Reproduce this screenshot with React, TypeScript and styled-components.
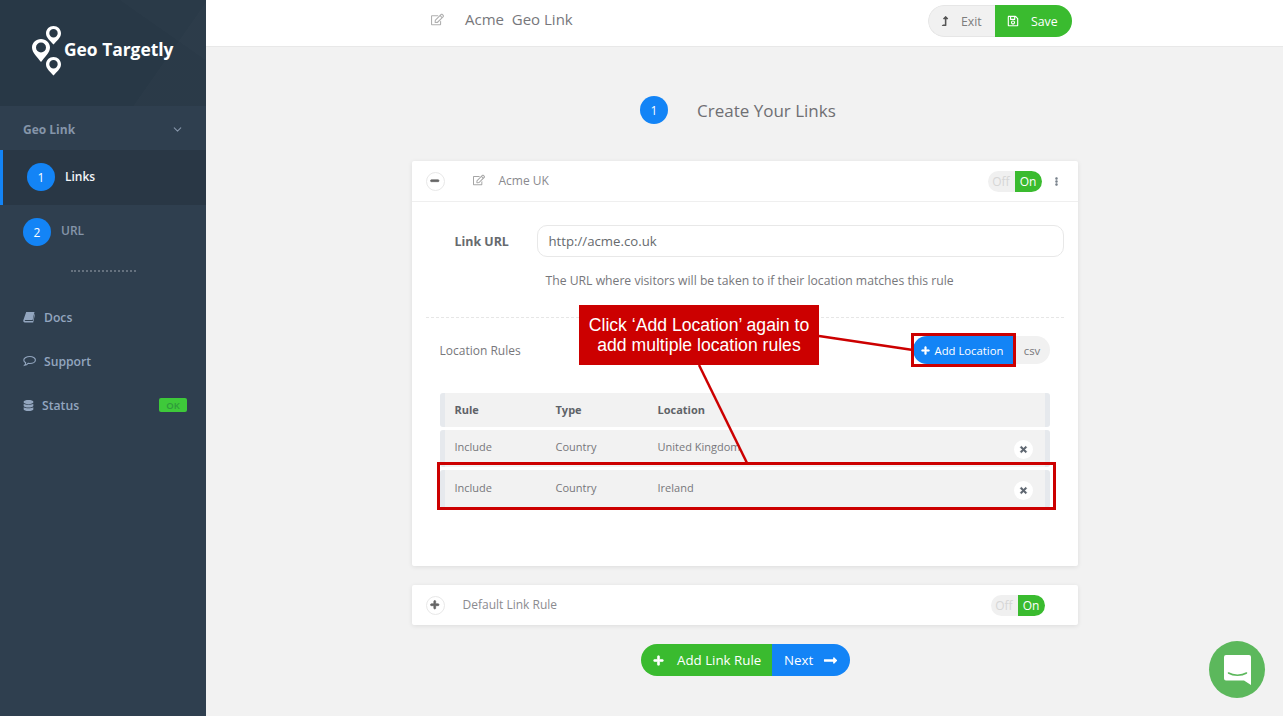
import React from "react";
import styled, { createGlobalStyle } from "styled-components";
import {
  FaDatabase,
  FaEllipsisV,
  FaLevelUpAlt,
  FaLongArrowAltRight,
  FaMinus,
  FaPlus,
  FaRegEdit,
  FaRegSave,
  FaTimes,
} from "react-icons/fa";
import { FiChevronDown } from "react-icons/fi";

const GREEN = "#3abb2f";
const BLUE = "#1384f6";
const RED = "#cc0000";

const GlobalStyle = createGlobalStyle`
  html, body {
    margin: 0;
    padding: 0;
    height: 100%;
    overflow: hidden;
    background: #f2f2f2;
  }
  body {
    font-family: "Open Sans", "Liberation Sans", sans-serif;
    color: #6d6d6d;
  }
  * {
    box-sizing: border-box;
  }
`;

const Page = styled.div`
  position: relative;
  display: flex;
  width: 100%;
  height: 716px;
  overflow: hidden;
`;

const Sidebar = styled.aside`
  flex: 0 0 206px;
  background: #2f3f4f;
`;

const LogoArea = styled.div`
  height: 106px;
  padding: 26px 0 0 30px;
  display: flex;
  align-items: flex-start;
  background:
    linear-gradient(125deg, transparent 74%, rgba(255, 255, 255, 0.012) 74.2%),
    linear-gradient(215deg, #2a3a48 0%, #2a3a48 24%, #283846 24.2%);
`;

const LogoText = styled.span`
  margin: 13px 0 0 2px;
  color: #ffffff;
  font-size: 17.4px;
  font-weight: 700;
  line-height: 20px;
  white-space: nowrap;
`;

const GroupRow = styled.div`
  height: 44px;
  padding: 2px 22px 0 23px;
  display: flex;
  align-items: center;
  justify-content: space-between;
  color: #8595a9;
  font-size: 12px;
  font-weight: 700;
`;

const StepRow = styled.div<{ $active?: boolean }>`
  height: 55px;
  display: flex;
  align-items: flex-start;
  padding: 13px 0 0 ${(p) => (p.$active ? 24 : 23)}px;
  background: ${(p) => (p.$active ? "#293745" : "transparent")};
  border-left: ${(p) => (p.$active ? `3px solid ${BLUE}` : "0")};
`;

const StepNumber = styled.span<{ $size: number }>`
  flex: none;
  width: ${(p) => p.$size}px;
  height: ${(p) => p.$size}px;
  border-radius: 50%;
  background: ${BLUE};
  color: #ffffff;
  display: flex;
  align-items: center;
  justify-content: center;
  font-size: 12px;
`;

const StepLabel = styled.span<{ $active?: boolean }>`
  margin: ${(p) => (p.$active ? 6 : 5)}px 0 0 10px;
  color: ${(p) => (p.$active ? "#f2f5f8" : "#8595a9")};
  font-size: 12px;
  font-weight: 600;
  line-height: 16px;
`;

const Dots = styled.div`
  width: 65px;
  margin: 10px 0 23px 71px;
  border-top: 2px dotted #65717e;
`;

const NavLink = styled.div<{ $gap: number }>`
  height: 44px;
  padding: 0 19px 0 23px;
  display: flex;
  align-items: center;
  gap: ${(p) => p.$gap}px;
  color: #93a6bf;
  font-size: 12.2px;
  font-weight: 600;
`;

const OkBadge = styled.span`
  margin-left: auto;
  width: 28px;
  height: 14px;
  border-radius: 2px;
  background: #3ec93a;
  color: #2f9a3c;
  font-size: 9.5px;
  font-weight: 600;
  display: flex;
  align-items: center;
  justify-content: center;
`;

const Main = styled.main`
  flex: 1;
  min-width: 0;
  display: flex;
  flex-direction: column;
  align-items: center;
`;

const TopBar = styled.header`
  align-self: stretch;
  flex: none;
  height: 47px;
  background: #ffffff;
  border-bottom: 1px solid #e8e8e8;
  padding: 5px 211px 0 225px;
  display: flex;
  align-items: flex-start;
`;

const DocTitle = styled.div`
  margin-top: -1px;
  display: flex;
  align-items: center;
  gap: 21px;
  height: 30px;
  color: #77777b;
  font-size: 15px;
  white-space: pre;
`;

const ExitSave = styled.div`
  margin-left: auto;
  display: flex;
  height: 32px;
  border-radius: 16px;
  overflow: hidden;
  font-size: 12.3px;
`;

const ExitButton = styled.div`
  width: 67px;
  padding-left: 11px;
  background: #f1f1f1;
  border: 1px solid #e6e6e6;
  border-right: 0;
  border-radius: 16px 0 0 16px;
  color: #7d7d7d;
  display: flex;
  align-items: center;
  gap: 11px;
`;

const SaveButton = styled.div`
  width: 77px;
  padding-left: 12px;
  background: ${GREEN};
  color: #ffffff;
  display: flex;
  align-items: center;
  gap: 12px;
`;

const StepHeading = styled.div`
  flex: none;
  width: 209px;
  margin: 49px 0 37px;
  display: flex;
  align-items: center;
  gap: 29px;
  color: #6f6f73;
  font-size: 17px;
  white-space: nowrap;
`;

const Card = styled.section`
  flex: none;
  width: 666px;
  background: #ffffff;
  border-radius: 2px;
  box-shadow: 0 1px 5px rgba(0, 0, 0, 0.09);
`;

const RuleCard = styled(Card)`
  height: 405px;
`;

const DefaultCard = styled(Card)`
  height: 40px;
  margin-top: 19px;
  padding: 0 33px 0 14px;
  display: flex;
  align-items: center;
  color: #8b8b8f;
  font-size: 12px;
`;

const CardHeader = styled.div`
  height: 41px;
  padding: 0 16px 0 14px;
  border-bottom: 1px solid #efefef;
  display: flex;
  align-items: center;
  color: #8a8a8e;
  font-size: 12px;
`;

const RoundToggle = styled.span`
  flex: none;
  width: 19px;
  height: 19px;
  border: 1px solid #e8e8e8;
  border-radius: 50%;
  background: #ffffff;
  color: #666666;
  font-size: 9.5px;
  display: flex;
  align-items: center;
  justify-content: center;
  svg {
    stroke: currentColor;
    stroke-width: 40;
  }
`;

const EditIcon = styled.span`
  margin: -2px 14px 0 28px;
  display: flex;
  color: #a6a6a6;
  font-size: 12px;
`;

const CardTitle = styled.span`
  margin-top: -2px;
`;

const DefaultTitle = styled(CardTitle)`
  margin-left: 18px;
`;

const Switch = styled.div`
  margin-left: auto;
  width: 54px;
  height: 21px;
  display: flex;
  border-radius: 11px;
  overflow: hidden;
  font-size: 12px;
`;

const SwitchSide = styled.span<{ $on?: boolean }>`
  flex: 1;
  display: flex;
  align-items: center;
  justify-content: center;
  background: ${(p) => (p.$on ? GREEN : "#f0f0f0")};
  color: ${(p) => (p.$on ? "#ffffff" : "#d6d6d6")};
`;

const MoreIcon = styled.span`
  margin-left: 10px;
  width: 10px;
  display: flex;
  justify-content: center;
  color: #77808a;
  font-size: 9px;
`;

const CardBody = styled.div`
  padding: 23px 14px 0 14px;
`;

const UrlRow = styled.div`
  display: flex;
  align-items: center;
  padding-left: 29px;
`;

const FieldLabel = styled.label`
  flex: none;
  width: 82px;
  color: #666a6e;
  font-size: 12.4px;
  font-weight: 700;
`;

const UrlField = styled.div`
  flex: 1;
  height: 32px;
  padding-left: 11px;
  border: 1px solid #e8e8e8;
  border-radius: 10px;
  color: #666a6e;
  font-size: 13.2px;
  display: flex;
  align-items: center;
`;

const Hint = styled.p`
  margin: 15px 0 0 120px;
  height: 18px;
  color: #77777b;
  font-size: 12.2px;
  line-height: 18px;
  white-space: nowrap;
`;

const Divider = styled.div`
  margin-top: 27px;
  border-top: 1px dashed #e6e6e6;
`;

const RulesHeader = styled.div`
  margin-top: 17px;
  height: 30px;
  padding: 0 14px;
  display: flex;
  align-items: center;
  color: #77777b;
  font-size: 12px;
`;

const AddButtons = styled.div`
  margin-left: auto;
  display: flex;
  height: 28px;
  border-radius: 14px;
  overflow: hidden;
  font-size: 11.3px;
`;

const AddLocation = styled.div`
  width: 102px;
  padding-left: 8px;
  background: ${BLUE};
  color: #ffffff;
  display: flex;
  align-items: center;
  gap: 5px;
  svg {
    stroke: currentColor;
    stroke-width: 30;
  }
`;

const Csv = styled.div`
  width: 35px;
  background: #f1f1f1;
  color: #77777b;
  display: flex;
  align-items: center;
  justify-content: center;
`;

const RuleTable = styled.div`
  margin: 28px 14px 0;
  display: flex;
  flex-direction: column;
  gap: 3px;
`;

const TableRow = styled.div<{ $height: number; $lift: number; $head?: boolean }>`
  height: ${(p) => p.$height}px;
  padding: 0 12px ${(p) => p.$lift}px 10px;
  display: grid;
  grid-template-columns: 101px 102px 1fr 19px;
  align-items: center;
  background: #f2f2f2;
  border-left: 5px solid #e6e9ed;
  border-right: 5px solid #e6e9ed;
  border-radius: 3px;
  color: ${(p) => (p.$head ? "#5f6368" : "#77777b")};
  font-size: 11px;
  font-weight: ${(p) => (p.$head ? 700 : 400)};
`;

const RemoveButton = styled.span`
  width: 19px;
  height: 19px;
  margin-top: 6px;
  border-radius: 50%;
  background: #ffffff;
  color: #5e6670;
  font-size: 9px;
  display: flex;
  align-items: center;
  justify-content: center;
  svg {
    stroke: currentColor;
    stroke-width: 40;
  }
`;

const BottomButtons = styled.div`
  flex: none;
  margin: 19px 0 0 2px;
  height: 32px;
  display: flex;
  border-radius: 16px;
  overflow: hidden;
  color: #ffffff;
  font-size: 13.300px;
`;

const AddRuleButton = styled.div`
  width: 131px;
  padding-left: 12px;
  background: ${GREEN};
  display: flex;
  align-items: center;
  gap: 13px;
  svg {
    stroke: currentColor;
    stroke-width: 30;
  }
`;

const NextButton = styled.div`
  width: 78px;
  padding-left: 12px;
  background: ${BLUE};
  display: flex;
  align-items: center;
  gap: 10px;
`;

const ChatBubble = styled.div`
  position: absolute;
  left: 1209px;
  top: 641px;
  width: 56px;
  height: 57px;
  border-radius: 50%;
  background: #5cb85c;
  display: flex;
  align-items: center;
  justify-content: center;
`;

const Callout = styled.div`
  position: absolute;
  left: 579px;
  top: 305px;
  width: 240px;
  height: 60px;
  padding-top: 10px;
  background: ${RED};
  color: #ffffff;
  font-family: "Liberation Sans", Arial, sans-serif;
  font-size: 17.6px;
  line-height: 20px;
  text-align: center;
  white-space: nowrap;
`;

const Highlight = styled.div<{ $x: number; $y: number; $w: number; $h: number }>`
  position: absolute;
  left: ${(p) => p.$x}px;
  top: ${(p) => p.$y}px;
  width: ${(p) => p.$w}px;
  height: ${(p) => p.$h}px;
  border: 3px solid ${RED};
`;

const Leaders = styled.svg`
  position: absolute;
  left: 0;
  top: 0;
  pointer-events: none;
`;

const LogoMark = () => (
  <svg width="32" height="50" viewBox="0 0 32 50" fill="#ffffff">
    <path
      fillRule="evenodd"
      d="M23.500 0c4.200 0 7.500 3.200 7.500 7.200 0 4.600-4.300 7.500-7.500 11.300-3.200-3.800-7.500-6.700-7.500-11.300C16 3.200 19.300 0 23.500 0zm0 3a4.200 4.200 0 1 0 0 8.400 4.200 4.200 0 0 0 0-8.400z"
    />
    <path
      fillRule="evenodd"
      d="M11 13c5 0 9 3.800 9 8.500 0 5-5.200 9.500-9 14.500-3.800-5-9-9.500-9-14.500C2 16.800 6 13 11 13zm0 3.500a5 5 0 1 0 0 10 5 5 0 0 0 0-10z"
    />
    <path
      fillRule="evenodd"
      d="M23.500 31c4.200 0 7.500 3.200 7.500 7.200 0 4.600-4.300 7.500-7.500 11.300-3.200-3.800-7.500-6.700-7.500-11.300 0-4 3.300-7.200 7.500-7.200zm0 3a4.200 4.200 0 1 0 0 8.400 4.200 4.200 0 0 0 0-8.400z"
    />
  </svg>
);

// the book and speech bubble in the reference are slanted/oval, not in the FA5 set
const SlantedBook = () => (
  <svg width="12" height="12" viewBox="0 0 12 12" fill="currentColor">
    <path d="M3.200 1h8.300L9.600 9H2.400c-.7 0-1 .9-.3 1.100h7.700L11.500 3l.5.500L10.200 11.500H1.800C.7 11.500 0 10.500.3 9.300z" />
  </svg>
);

const OvalComment = () => (
  <svg width="13" height="12" viewBox="0 0 13 12" fill="none" stroke="currentColor" strokeWidth="1.100">
    <path d="M6.800 1.500c3 0 5.600 1.500 5.600 3.500S9.800 8.500 6.800 8.500c-.6 0-1.200 0-1.700-.2-.8.900-2 1.700-3.500 2 .6-.7 1-1.500 1.100-2.500C1.500 7.200.8 6.100.8 5c0-2 3-3.500 6-3.500z" />
  </svg>
);

const rows = [
  { rule: "Include", type: "Country", location: "United Kingdom", height: 37, lift: 5 },
  { rule: "Include", type: "Country", location: "Ireland", height: 38, lift: 3 },
];

const App = () => {
  return (
    <Page>
      <GlobalStyle />
      <Sidebar>
        <LogoArea>
          <LogoMark />
          <LogoText>Geo Targetly</LogoText>
        </LogoArea>
        <GroupRow>
          Geo Link
          <FiChevronDown size={13} />
        </GroupRow>
        <StepRow $active>
          <StepNumber $size={28}>1</StepNumber>
          <StepLabel $active>Links</StepLabel>
        </StepRow>
        <StepRow>
          <StepNumber $size={28}>2</StepNumber>
          <StepLabel>URL</StepLabel>
        </StepRow>
        <Dots />
        <NavLink $gap={9}>
          <SlantedBook />
          Docs
        </NavLink>
        <NavLink $gap={8}>
          <OvalComment />
          Support
        </NavLink>
        <NavLink $gap={8}>
          <FaDatabase size={11} />
          Status
          <OkBadge>OK</OkBadge>
        </NavLink>
      </Sidebar>

      <Main>
        <TopBar>
          <DocTitle>
            <FaRegEdit size={13} color="#b0b0b0" />
            {"Acme  Geo Link"}
          </DocTitle>
          <ExitSave>
            <ExitButton>
              <FaLevelUpAlt size={10} color="#555555" />
              Exit
            </ExitButton>
            <SaveButton>
              <FaRegSave size={12} />
              Save
            </SaveButton>
          </ExitSave>
        </TopBar>

        <StepHeading>
          <StepNumber $size={28}>1</StepNumber>
          Create Your Links
        </StepHeading>

        <RuleCard>
          <CardHeader>
            <RoundToggle>
              <FaMinus />
            </RoundToggle>
            <EditIcon>
              <FaRegEdit />
            </EditIcon>
            <CardTitle>Acme UK</CardTitle>
            <Switch>
              <SwitchSide>Off</SwitchSide>
              <SwitchSide $on>On</SwitchSide>
            </Switch>
            <MoreIcon>
              <FaEllipsisV />
            </MoreIcon>
          </CardHeader>
          <CardBody>
            <UrlRow>
              <FieldLabel>Link URL</FieldLabel>
              <UrlField>http://acme.co.uk</UrlField>
            </UrlRow>
            <Hint>The URL where visitors will be taken to if their location matches this rule</Hint>
            <Divider />
            <RulesHeader>
              Location Rules
              <AddButtons>
                <AddLocation>
                  <FaPlus size={9} />
                  Add Location
                </AddLocation>
                <Csv>csv</Csv>
              </AddButtons>
            </RulesHeader>
            <RuleTable>
              <TableRow $height={34} $lift={2} $head>
                <span>Rule</span>
                <span>Type</span>
                <span>Location</span>
              </TableRow>
              {rows.map((row) => (
                <TableRow key={row.location} $height={row.height} $lift={row.lift}>
                  <span>{row.rule}</span>
                  <span>{row.type}</span>
                  <span>{row.location}</span>
                  <RemoveButton>
                    <FaTimes />
                  </RemoveButton>
                </TableRow>
              ))}
            </RuleTable>
          </CardBody>
        </RuleCard>

        <DefaultCard>
          <RoundToggle>
            <FaPlus />
          </RoundToggle>
          <DefaultTitle>Default Link Rule</DefaultTitle>
          <Switch>
            <SwitchSide>Off</SwitchSide>
            <SwitchSide $on>On</SwitchSide>
          </Switch>
        </DefaultCard>

        <BottomButtons>
          <AddRuleButton>
            <FaPlus size={11} />
            Add Link Rule
          </AddRuleButton>
          <NextButton>
            Next
            <FaLongArrowAltRight size={15} />
          </NextButton>
        </BottomButtons>
      </Main>

      <Leaders width="1283" height="716">
        <line x1="819" y1="336" x2="913" y2="350" stroke={RED} strokeWidth="2.500" />
        <line x1="699" y1="365" x2="747" y2="463" stroke={RED} strokeWidth="2.500" />
      </Leaders>
      <Callout>
        Click ‘Add Location’ again to
        <br />
        add multiple location rules
      </Callout>
      <Highlight $x={911} $y={333} $w={105} $h={34} />
      <Highlight $x={437} $y={462} $w={619} $h={48} />

      <ChatBubble>
        <svg width="27" height="30" viewBox="0 0 27 30">
          <path d="M2 0h23a2 2 0 0 1 2 2v28l-7-4.500H2a2 2 0 0 1-2-2V2a2 2 0 0 1 2-2z" fill="#ffffff" />
          <path d="M4.500 18c5 3 13 3 18 0" fill="none" stroke="#5cb85c" strokeWidth="1.500" strokeLinecap="round" />
        </svg>
      </ChatBubble>
    </Page>
  );
};

export default App;
